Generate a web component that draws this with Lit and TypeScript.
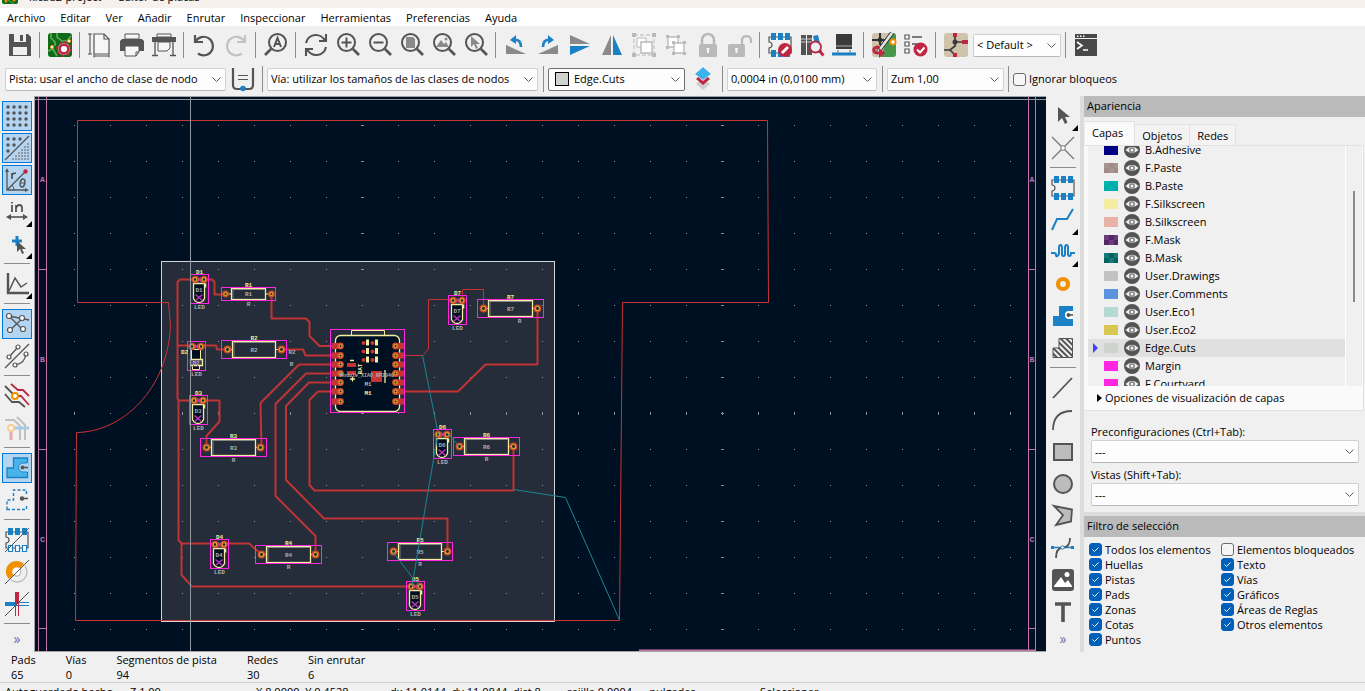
import { LitElement, html, svg, css, nothing } from "lit";
import { customElement, property } from "lit/decorators.js";
import { classMap } from "lit/directives/class-map.js";

const D = "#545454";
const B = "#1a81c4";
const R = "#bf2641";
const G = "#b9b9b9";
const O = "#f29100";

const lens = (inner: unknown) => svg`
  <circle cx="10.5" cy="9.5" r="8.5" fill="none" stroke=${D} stroke-width="2"/>
  <path d="M17 16l6 6" stroke=${D} stroke-width="2.6"/>${inner}`;

const module6 = svg`
  <path d="M1 4h22v16H1v-5a3 3 0 0 0 0-6z" fill="none" stroke=${D} stroke-width="1.2"/>
  <path d="M3 0h5v7H3zM10 0h5v7h-5zM17 0h5v7h-5zM3 17h5v7H3zM10 17h5v7h-5zM17 17h5v7h-5z" fill=${B}/>`;

const icons: Record<string, unknown> = {
  save: svg`<path d="M1 1h19l3 3v19H1z" fill=${D}/><path d="M6 1h12v8H6zM5 14h14v8H5z" fill="#efefef"/><path d="M12 2h3v6h-3z" fill=${D}/>`,
  setup: svg`<rect width="24" height="24" rx="3" fill="#0d6b1b"/>
    <path d="M3 0v5l4 4v4M9 0v4l5 4h5l4-5M0 18l5-2 4 7" fill="none" stroke="#5fae52" stroke-width="1.6"/>
    <circle cx="4" cy="14" r="1.6" fill="#fff" stroke=${O}/><circle cx="21" cy="8" r="1.6" fill="#fff" stroke=${O}/>
    <circle cx="16" cy="16" r="6" fill="#fff"/>
    <circle cx="16" cy="16" r="6.800" fill="none" stroke=${R} stroke-width="2" stroke-dasharray="2.6 2.74"/>
    <circle cx="16" cy="16" r="4.400" fill="#fff" stroke=${R} stroke-width="2.600"/>`,
  page: svg`<path d="M6 1h10l5 5v15H6z" fill="#f6f6f6" stroke=${D} stroke-width="1.2"/><path d="M16 1v5h5M2 1v20M0 1h4M0 21h4M6 23h15M6 21.500v3M21 21.500v3" fill="none" stroke=${D} stroke-width="1.1"/>`,
  print: svg`<path d="M5 1h14v5H5z" fill="#f6f6f6" stroke=${D}/><path d="M2 6h20l2 2v10H0V8z" fill=${D}/><path d="M5 13h14v6l-3 4H5z" fill="#f6f6f6" stroke=${D}/><path d="M16 23v-4h3" fill="none" stroke=${D}/>`,
  plot: svg`<path d="M5 1h14v3H5z" fill="#f6f6f6" stroke=${D}/><path d="M0 4h24v5H0z" fill=${D}/><path d="M6 9h12v6l-3 3H6z" fill="#f6f6f6" stroke=${D}/><path d="M3 9v13M21 9v13M0 22.500h6M18 22.500h6" stroke=${D} stroke-width="1.3"/>`,
  undo: svg`<path d="M3 2v7h8M3.500 8.500A9.300 9.300 0 1 1 6 20.500" fill="none" stroke=${D} stroke-width="2.2"/>`,
  redo: svg`<path d="M21 2v7h-8M20.500 8.500A9.300 9.300 0 1 0 18 20.500" fill="none" stroke="#c2c2c2" stroke-width="2.2"/>`,
  find: svg`<circle cx="13.500" cy="9.500" r="8.500" fill="none" stroke=${D} stroke-width="2"/><path d="M7 16l-6 6" stroke=${D} stroke-width="2.600"/><path d="M10 14l3.500-9L17 14M11 11h5" fill="none" stroke=${D} stroke-width="2"/>`,
  refresh: svg`<path d="M2 10A10 10 0 0 1 21 8M22 14A10 10 0 0 1 3 16M22 1v7h-7M2 23v-7h7" fill="none" stroke=${D} stroke-width="2.100"/>`,
  zoomin: lens(svg`<path d="M5.500 9.500h10M10.500 4.500v10" stroke=${D} stroke-width="2"/>`),
  zoomout: lens(svg`<path d="M5.500 9.500h10" stroke=${D} stroke-width="2"/>`),
  zoompage: lens(svg`<path d="M6 4h7l2 2v9H6z" fill="#8a8a8a"/>`),
  zoomobj: lens(svg`<path d="M4 14l5-7 3 4 2-2 3 5z" fill="#8a8a8a"/><circle cx="14" cy="6" r="1.500" fill="#8a8a8a"/>`),
  zoomsel: lens(svg`<path d="M7 3v11l3-3 2 5 2-1-2-4h4z" fill="#8a8a8a"/>`),
  rotl: svg`<path d="M2 12v9h20z" fill="#8a8a8a"/><path d="M9 7c6-1 8 2 8 7" fill="none" stroke=${B} stroke-width="2.600"/><path d="M6 7l6-5v9z" fill=${B}/>`,
  rotr: svg`<path d="M22 12v9H2z" fill="#8a8a8a"/><path d="M15 7c-6-1-8 2-8 7" fill="none" stroke=${B} stroke-width="2.600"/><path d="M18 7l-6-5v9z" fill=${B}/>`,
  flipv: svg`<path d="M2 2l20 9H2z" fill="#8a8a8a"/><path d="M2 22l20-9H2z" fill=${B}/>`,
  fliph: svg`<path d="M11 2v20H2z" fill="#8a8a8a"/><path d="M13 2v20h9z" fill=${B}/>`,
  group: svg`<rect x="2" y="2" width="20" height="20" fill="none" stroke=${G} stroke-dasharray="4 2"/><path d="M5 5h9v9H5z" fill="#fff" stroke=${G}/><path d="M9 9h11v11H9z" fill="#fff" stroke=${G} stroke-width="1.400"/><path d="M0 0h4v4H0zM20 0h4v4h-4zM0 20h4v4H0zM20 20h4v4h-4z" fill=${G}/>`,
  ungroup: svg`<path d="M4 4h10v10H4z" fill="#fff" stroke=${G} stroke-width="1.300"/><path d="M10 10h10v10H10z" fill="#fff" stroke=${G} stroke-width="1.300"/><path d="M2 2h3v3H2zM13 2h3v3h-3zM2 13h3v3H2zM8 8h3v3H8zM19 8h3v3h-3zM8 19h3v3H8zM19 19h3v3h-3z" fill=${G}/>`,
  lock: svg`<path d="M6 12V7a6 6 0 0 1 12 0v5" fill="none" stroke=${G} stroke-width="2.600"/><rect x="3" y="11" width="18" height="13" rx="1.500" fill=${G}/><path d="M12 15v5M10.500 16h3" stroke="#f4f4f4" stroke-width="2"/>`,
  unlock: svg`<path d="M14 12V6a5 5 0 0 1 9 0v4" fill="none" stroke=${G} stroke-width="2.200"/><rect x="0" y="11" width="17" height="13" rx="1.500" fill=${G}/><path d="M8.500 15v5M7 16h3" stroke="#f4f4f4" stroke-width="2"/>`,
  fpedit: svg`${module6}<circle cx="17" cy="17" r="7" fill=${R}/><path d="M14 20l6-6" stroke="#fff" stroke-width="2.800"/>`,
  libs: svg`<path d="M1 2h5v20H1zM7 2h5v20H7z" fill=${D}/><path d="M1 6h11M1 9h11" stroke="#ccc"/><path d="M13 3l5-1 4 17-5 1z" fill=${B}/><circle cx="15.500" cy="14" r="5.500" fill="#e9eff5" stroke=${R} stroke-width="1.800"/><path d="M19.500 18l4 4.500" stroke=${R} stroke-width="2.800"/>`,
  fpview: svg`<path d="M4 1h16v15H4z" fill="#3b3b3b"/><path d="M4 13h16M6 17v3M18 17v3" stroke="#8a8a8a" stroke-width="1.300"/><path d="M0 21h24" stroke=${B} stroke-width="3"/>`,
  update: svg`<rect width="24" height="24" rx="3" fill="#cfc3ab"/><path d="M24 3v18a3 3 0 0 1-3 3H9L17 0h4a3 3 0 0 1 3 3z" fill="#48964a"/><path d="M8 0v7H0M8 7h6M8 7v5" stroke="#333" stroke-width="2" fill="none"/><circle cx="8" cy="7" r="2.400" fill="#333"/><path d="M20 0L6 19" stroke="#333" stroke-width="4.500"/><path d="M20 0L6 19" stroke="#e4e4e4" stroke-width="2.600"/><circle cx="21" cy="9" r="2.600" fill="#fff" stroke=${O} stroke-width="1.800"/><path d="M7 14c-7 0-7 6 0 6" fill="none" stroke=${R} stroke-width="3"/><path d="M7 15l6 5-6 5z" fill=${R}/>`,
  drc: svg`<path d="M1 2h4v4H1zM1 9h4v4H1zM1 16h4v4H1z" fill="#fff" stroke=${D} stroke-width="1.200"/><path d="M8 4h10M8 11h5" stroke=${D} stroke-width="1.500"/><circle cx="16.500" cy="16.500" r="7" fill=${R}/><path d="M13 16.500l3 3 4.500-5" fill="none" stroke="#fff" stroke-width="2"/>`,
  sch: svg`<rect width="24" height="24" rx="3" fill="#cfc3ab"/><path d="M11 4v10M11 9h8M0 17h6l5-4M6 17l6 6" stroke="#3a3a3a" stroke-width="1.700" fill="none"/><path d="M9 0h4v4H9zM18 7h6v4h-6zM9 20h4v4H9z" fill=${R}/><circle cx="11" cy="9" r="2.500" fill="#3a3a3a"/>`,
  term: svg`<path d="M1 1h22v22H1z" fill="#484848"/><path d="M1 5.500h22" stroke="#efefef"/><path d="M3 3.300h1.500M6 3.300h1.500M9 3.300h1.500" stroke="#fff" stroke-width="1.500"/><path d="M3 9l5 3.500L3 16M9 17h5" fill="none" stroke="#fff" stroke-width="1.600"/>`,
  trackw: svg`<path d="M2 1v17q0 4 4 4h12q4 0 4-4V1" fill="none" stroke=${D} stroke-width="2.200"/><path d="M7 8.500h10M7 12.500h10" stroke=${D} stroke-width="1.200"/><circle cx="12" cy="21.500" r="2.800" fill=${B}/>`,
  layers: svg`<path d="M5 17l7-6 7 6-7 6z" fill="#cfcfcf"/><path d="M5 12l7-6 7 6-7 6z" fill=${R}/><path d="M4 7l8-8 8 8-8 7z" fill="#fff"/><path d="M4 7l8-7 8 7-8 6z" fill="#3eb0ea"/>`,
  grid: svg`${[3, 9, 15, 21].map((y) => [3, 9, 15, 21].map((x) => svg`<circle cx=${x} cy=${y} r="1.700" fill=${D}/>`))}`,
  gridov: svg`<path d="M0 24L24 0" stroke=${D} stroke-width="1.200"/>${[[3, 3], [9, 3], [15, 3], [3, 9], [9, 9], [3, 15]].map((p) => svg`<circle cx=${p[0]} cy=${p[1]} r="1.700" fill=${D}/>`)}
    ${[8, 11, 14, 17, 20, 23].map((x) => [8, 11, 14, 17, 20, 23].map((y) => (x + y >= 30 ? svg`<rect x=${x - 1} y=${y - 1} width="2" height="2" fill="#8d9aa5"/>` : nothing)))}`,
  polar: svg`<path d="M2 2v20h20M2 22L20 4" fill="none" stroke=${D} stroke-width="1.300"/><path d="M0 4l2-4 2 4zM20 20l4 2-4 2z" fill=${D}/><path d="M7 17q2 2 2 5" fill="none" stroke=${D}/><circle cx="20.500" cy="3.500" r="2.200" fill=${R}/><path d="M7 11V5m0 2q1-2 4-2" fill="none" stroke=${D} stroke-width="1.700"/><ellipse cx="17.500" cy="15" rx="2.300" ry="4" fill="none" stroke=${D} stroke-width="1.500" transform="rotate(12 17.500 15)"/><path d="M15 15h5" stroke=${D}/>`,
  inch: svg`<path d="M7 5v7M7 2v1.500M11 12V5m0 3q1-3 3.500-3T17 8v4" fill="none" stroke=${D} stroke-width="1.800"/><path d="M3 17h18" stroke=${D} stroke-width="1.600"/><path d="M1 17l5-3v6zM23 17l-5-3v6z" fill=${D}/>`,
  cursor: svg`<path d="M12 4v10M7 9h10" stroke=${B} stroke-width="3"/><path d="M12 9v11l3-3 2 5 2-1-2-4h4z" fill=${D}/>`,
  curve: svg`<path d="M3 1v20h21" fill="none" stroke=${D} stroke-width="2.400"/><path d="M4 19L10 6l6 9 6-4" fill="none" stroke=${D} stroke-width="1.500"/>`,
  rats: svg`<path d="M4 4l14 14M4 19L19 5M4 4l20 4" stroke=${D} stroke-width="1.300"/><g fill="#fff" stroke=${D} stroke-width="1.200"><circle cx="4" cy="4" r="2.500"/><circle cx="17" cy="6" r="2.500"/><circle cx="5" cy="18" r="2.500"/><circle cx="18" cy="17" r="2.500"/></g>`,
  ratc: svg`<path d="M0 24L24 0M4 13L13 3M10 21q10-1 11-12" fill="none" stroke=${D} stroke-width="1.300"/><g fill="#fff" stroke=${D} stroke-width="1.200"><circle cx="4" cy="13" r="2"/><circle cx="13" cy="3" r="2"/><circle cx="10" cy="21" r="2"/><circle cx="21" cy="10" r="2"/></g>`,
  inactive: svg`<path d="M6 0l7 6h5l6 6M11 12h5l8 9" fill="none" stroke=${R} stroke-width="1.800"/><path d="M0 2l8 8M0 10l7 8h7l6 5" fill="none" stroke=${D} stroke-width="1.800"/><circle cx="10" cy="12" r="3" fill="#fff" stroke=${O} stroke-width="2"/>`,
  hicon: svg`<path d="M0 4h9l6 6v14M12 1l8 8v15" fill="none" stroke="#c0c0c0" stroke-width="2"/><path d="M6 13v11" stroke="#e5a9b3" stroke-width="3"/><path d="M9 12h15" stroke="#a6cbe5" stroke-width="3"/><circle cx="6" cy="12" r="3" fill="#fff" stroke="#f5ce96" stroke-width="2"/>`,
  zonefill: svg`<path d="M2 21.500V12h6.500V2h14v19.500z" fill="#48b3ea" stroke=${B} stroke-width="1.300"/><path d="M23 7h-5a4.500 4.500 0 0 0 0 9h5z" fill="#b3d5f2"/><path d="M22 7h-4a4.500 4.500 0 0 0 0 9h4" fill="none" stroke=${B}/><path d="M17 11.500h6" stroke=${D} stroke-width="1.600"/><circle cx="17.500" cy="11.500" r="2" fill=${D}/>`,
  zoneout: svg`<path d="M2 21.500V12h6.500V2h13v19.500z" fill="none" stroke=${B} stroke-width="1.400" stroke-dasharray="3 2"/><path d="M23 7h-6v9h6z" fill="#efefef"/><path d="M16 10.500h7" stroke=${D} stroke-width="1.600"/><circle cx="17" cy="10.500" r="2.200" fill=${D}/>`,
  fpsketch: svg`<path d="M1 4h22v16H1v-5a3 3 0 0 0 0-6z" fill="none" stroke=${D} stroke-width="1.200"/><path d="M3 0h5v7H3zM10 0h5v7h-5zM17 0h5v7h-5z" fill=${B}/><path d="M3.500 17.500h4v6h-4zM10.500 17.500h4v6h-4zM17.500 17.500h4v6h-4z" fill="#fff" stroke=${B} stroke-width="1.200"/><path d="M0 24L24 0" stroke=${D}/>`,
  viask: svg`<path d="M4 19A10.500 10.500 0 0 1 19 4l-4 4.500a4.500 4.500 0 0 0-6.500 6.500z" fill=${O}/><circle cx="12" cy="12" r="4" fill="#fff"/><path d="M20 6A10 10 0 0 1 6 20" fill="none" stroke="#bcbcbc" stroke-width="1.300"/><path d="M14.500 9A4 4 0 0 1 9 15" fill="none" stroke="#bcbcbc" stroke-width="1.300"/><path d="M0 24L24 0" stroke=${D}/>`,
  tracksk: svg`<path d="M0 12h12" stroke=${B} stroke-width="4"/><path d="M12 10.500h12M12 13.500h12" stroke=${B}/><path d="M12 0v12" stroke=${R} stroke-width="4"/><path d="M10.500 12v12M13.500 12v12" stroke=${R}/><path d="M0 24L24 0" stroke=${D}/>`,
  arrow: svg`<path d="M7 3v15l4-4 3 6 2.500-1.500L14 13h5z" fill=${D}/>`,
  ratx: svg`<path d="M1 1l22 22M23 1L1 23" stroke="#7a7a7a" stroke-width="1.400"/><circle cx="12" cy="12" r="2.300" fill="#fff" stroke="#7a7a7a"/>`,
  module: module6,
  route: svg`<path d="M1 22l5-11h10l6-10" fill="none" stroke=${B} stroke-width="2"/>`,
  tune: svg`<path d="M0 13h3q2 0 2 2t1.500 1T8 13V8q0-3 1.500-3T11 8v6q0 2 1.500 2T14 14V8q0-3 1.500-3T17 8v6q0 2 1.500 2T20 13h4" fill="none" stroke=${B} stroke-width="2"/>`,
  via: svg`<circle cx="12" cy="12" r="5" fill="none" stroke=${O} stroke-width="4.200"/>`,
  zone: svg`<path d="M2 22V12h6V2h14v20z" fill=${B}/><path d="M22 7h-4a4 4 0 0 0 0 8h4z" fill="#fff"/><path d="M17 11h5" stroke=${D} stroke-width="1.600"/><circle cx="17.500" cy="11" r="2" fill=${D}/>`,
  rule: svg`<defs><pattern id="h" width="4" height="4" patternUnits="userSpaceOnUse" patternTransform="rotate(-45)"><rect width="2" height="4" fill=${D}/></pattern></defs><path d="M2 21.500V12h6V2.500h13.500v19z" fill="url(#h)" stroke=${D}/>`,
  line: svg`<path d="M2 22L21 2" stroke=${D} stroke-width="1.800"/>`,
  arc: svg`<path d="M2 22Q2 3 21 3" fill="none" stroke=${D} stroke-width="1.800"/>`,
  rect: svg`<rect x="3" y="4" width="18" height="16" fill="#bcbcbc" stroke=${D} stroke-width="2"/>`,
  circle: svg`<circle cx="12" cy="12" r="9" fill="#bcbcbc" stroke=${D} stroke-width="2"/>`,
  poly: svg`<path d="M3 2l18 3.500-1 12-15 3.500 7-10z" fill="#bcbcbc" stroke=${D} stroke-width="1.800"/>`,
  bezier: svg`<path d="M1 11.500h21" stroke=${B} stroke-width="1.500"/><path d="M5 22q0-10 7-10.500T19 2" fill="none" stroke=${D} stroke-width="1.800"/><path d="M0 10h3v3H0zM20 10h3v3h-3z" fill=${B}/><circle cx="11.500" cy="11.500" r="1.700" fill="#fff" stroke=${B}/>`,
  image: svg`<rect x="1" y="1" width="22" height="22" rx="3" fill=${D}/><path d="M3 18l7-9 4 6 3-3 4 6v1H3z" fill="#fff"/><circle cx="16" cy="6.500" r="2.500" fill="#fff"/>`,
  text: svg`<path d="M4 4h16M12 4v18" fill="none" stroke=${D} stroke-width="3.600"/>`,
};

@customElement("tool-icon")
class ToolIcon extends LitElement {
  static styles = css`
    :host { display: block; width: 24px; height: 24px; }
    svg { display: block; width: 24px; height: 24px; overflow: visible; }
  `;
  @property() name = "";
  render() {
    return html`<svg viewBox="0 0 24 24" aria-hidden="true">${icons[this.name]}</svg>`;
  }
}

const SILK = "#f2eda1";
const MAG = "#ff26e2";
const CU = "#c83434";
const FAB = "#afafaf";

const pad = (x: number, y: number, r = 3) => svg`
  <circle cx=${x} cy=${y} r=${r} fill="#10202c" stroke="#cf4a2c" stroke-width="1.800"/>
  <circle cx=${x} cy=${y} r=${r - 1} fill="none" stroke="#d9a62b" stroke-width="1.200"/>`;

const label = (x: number, y: number, t: string, c: string) =>
  svg`<text x=${x} y=${y} fill=${c} text-anchor="middle">${t}</text>`;

const resistor = (x: number, y: number, n: string, w = 66, h = 18, vx = w / 2, vy = h + 5) => {
  const bx = w === 54 ? 10 : 11;
  return svg`<g transform="translate(${x} ${y})">
    <path d="M6 ${h / 2}H${w - 5}" stroke=${SILK}/>
    <rect x=${bx} y="1" width=${w - 2 * bx} height=${h - 2} fill="#242d39" stroke=${SILK} stroke-width="1.300"/>
    <path d="M${bx + 1.5} ${h - 2}V2H${w - bx - 1}" fill="none" stroke=${FAB} stroke-width=".6"/>
    <rect width=${w} height=${h} fill="none" stroke=${MAG}/>
    ${pad(w === 54 ? 4 : 6, h / 2, w === 54 ? 2.5 : 3)}${pad(w === 54 ? 50 : 60, h / 2, w === 54 ? 2.5 : 3)}
    ${label(w / 2, -1, n, SILK)}${label(w / 2, h / 2 + 2, n, FAB)}${label(vx, vy, "R", FAB)}
  </g>`;
};

const domeBody = svg`
  <path d="M3 9h11v15q-2 4-5.500 4T3 24z" fill="#001023" stroke=${SILK} stroke-width="1.300"/>
  <path d="M15 9v4" stroke=${SILK} stroke-width="1.500"/>
  <path d="M5 20l7 6M12 20l-7 6" stroke="#c433bb" stroke-width="1.500"/>`;

const flatBody = svg`
  <path d="M4 8h9v10H4zM5 24h7v4H5z" fill="#001023" stroke=${SILK}/>
  <path d="M3 18h12v6H3z" fill="#3a4450" stroke=${SILK} stroke-width="1.300"/>
  <path d="M5 19l6 6M11 19l-6 6" stroke="#c433bb"/>`;

const led = (x: number, y: number, n: string, flat = false) => svg`<g transform="translate(${x} ${y})">
  ${flat ? flatBody : domeBody}
  <rect width="18" height="29" fill="none" stroke=${MAG}/>
  <path d="M7 3l4 4M11 3l-4 4" stroke="#c433bb" stroke-width="1.500"/>
  ${pad(4.5, 5, 2.8)}${pad(13.5, 5, 2.8)}
  ${flat ? label(-3, 12, n, SILK) : label(9, -1, n, SILK)}${label(8.5, flat ? 23 : 17, n, FAB)}${label(9, 34, "LED", FAB)}
</g>`;

const pinsY = [346, 355.5, 364.5, 373.5, 382.5, 391.5, 401.5];

@customElement("pcb-canvas")
class PcbCanvas extends LitElement {
  static styles = css`
    :host { display: block; min-width: 0; min-height: 0; background: #001023; overflow: hidden; }
    svg { display: block; width: 100%; height: 100%; }
    text { font: 700 6px "Liberation Mono", monospace; }
    .zone-letter { font-size: 8px; fill: #c872ac; }
    .tiny { font-size: 5px; }
  `;
  render() {
    return html`<svg viewBox="34 96 1012 556" preserveAspectRatio="xMinYMin slice">
      <defs>
        <pattern id="dots" x="74" y="125" width="36" height="36" patternUnits="userSpaceOnUse">
          <rect width="1" height="1" fill="#8b9093"/>
        </pattern>
      </defs>
      <rect x="161.500" y="261.500" width="393" height="360" fill="#242d39" stroke="#d4d4d4"/>
      <rect x="74" y="120" width="940" height="520" fill="url(#dots)"/>
      <path d="M361 269.500h3M361 125.500h3M361 161.500h3M361 197.500h3M361 233.500h3M361 629.500h3M721 125.500h3M721 161.500h3M721 197.500h3M721 233.500h3M721 269.500h3M721 305.500h3M721 341.500h3M721 377.500h3M721 449.500h3M721 485.500h3M721 521.500h3M721 557.500h3M721 593.500h3M721 629.500h3M361 413.500h3M721 413.500h3" stroke="#8b9093"/>
      <path d="M74.500 412v3M182.500 412v3M218.500 412v3M290.500 412v3M434.500 412v3M470.500 412v3M506.500 412v3M542.500 412v3M578.500 412v3M614.500 412v3M650.500 412v3M686.500 412v3M722.500 412v3M758.500 412v3M794.500 412v3M830.500 412v3M866.500 412v3M902.500 412v3M938.500 412v3M974.500 412v3M1010.500 412v3" stroke="#8b9093"/>
      <g stroke="#c872ac" fill="none">
        <path d="M38.500 97v554M46.500 97v554M38.500 269.500h8M38.500 449.500h8M38.500 628.500h8"/>
        <path d="M1028.500 97v554M1035.500 97v554M1028.500 269.500h7M1028.500 449.500h7M1028.500 628.500h7"/>
        <path d="M639 650.500h396" stroke-width="2"/>
      </g>
      ${[["A", 182], ["B", 362], ["C", 542]].map(([t, y]) => svg`
        <text class="zone-letter" x="42.500" y=${y} text-anchor="middle">${t}</text>
        <text class="zone-letter" x="1032" y=${y} text-anchor="middle">${t}</text>`)}
      <path d="M77.500 120.500H767.500L768.500 302.500H622.500L619.500 620.500H75.500L76.500 432.500C122 432 168 390 170.500 325L168.500 302.500H77.500z" fill="none" stroke=${CU}/>
      <g fill="none" stroke="#c03435" stroke-width="2" stroke-linejoin="round">
        <path d="M194 279.500H180L177.500 282V398L178.500 401V540L181.500 543.500H215M181.500 543.500V575L192 586.500H411M177.500 345.500H191M178.500 400.500H193"/>
        <path d="M203 279.500H212L214.500 282V294.500H226M271.500 294.500V318.500H306L309.500 322V336L319.500 346H336"/>
        <path d="M200 345.500H216L217 349.500H226M281 349.500H303L305.500 355.500H336"/>
        <path d="M203 400.500H219.500V421.500L206.500 436V447M261.500 447L260.500 403L299 364.500H336"/>
        <path d="M336 373.500H306L275.500 404V496L315.500 536V554M336 382.500H309L286 406V480L324 518.500H447.500V551"/>
        <path d="M336 391.500H318L309.500 400V485L314.500 490.500H513.500V446M224 543.500H249L261 554"/>
        <path d="M398 391.500H458L485.500 364.500H537.500V308"/>
        <path d="M398 355.500H423L428.500 349V299.500H453M462.500 299.500V289.500H483.500V308" stroke-width="1"/>
      </g>
      ${resistor(221.5, 287.5, "R1", 54, 13)}
      ${resistor(221.5, 340.5, "R2", 65, 18, 70, 25)}
      ${label(292, 354, "R2", FAB)}
      ${resistor(200.5, 438.5, "R3")}
      ${resistor(255.5, 545.5, "R4")}
      ${resistor(387.5, 542.5, "R5", 65)}
      ${resistor(453.5, 437.5, "R6")}
      ${resistor(477.5, 299.5, "R7", 66, 18, 42)}
      ${led(190.5, 274.5, "D1")}
      ${led(187.5, 341.5, "D2", true)}
      ${led(189.5, 395.5, "D3")}
      ${led(210.5, 539.5, "D4")}
      ${led(406.5, 581.5, "D5")}
      ${led(433.5, 429.5, "D6")}
      ${led(448.5, 295.5, "D7")}
      <g>
        <rect x="335.500" y="335.500" width="64" height="76" rx="5" fill="#001023" stroke=${SILK} stroke-width="1.300"/>
        <path d="M351.500 335V330.500h33V335" fill="none" stroke=${SILK}/>
        <rect x="330.500" y="329.500" width="74" height="83" fill="none" stroke=${MAG}/>
        ${pinsY.map((y) => svg`<rect x="332" y=${y - 3} width="10" height="6" fill=${CU}/><rect x="394" y=${y - 3} width="10" height="6" fill=${CU}/>${pad(340.5, y, 2.5)}${pad(395.5, y, 2.5)}`)}
        ${[343, 351.5, 360].map((y) => svg`<circle cx="363.500" cy=${y} r="2" fill=${CU}/><circle cx="372.500" cy=${y} r="2" fill=${CU}/><rect x="366" y=${y - 3.5} width="3" height="6" fill=${SILK}/><rect x="375" y=${y - 3.5} width="3" height="6" fill=${SILK}/>`)}
        <path d="M347 363h9v4h-9zM347 371h9v4h-9zM371 371h11v11h-11z" fill=${CU}/>
        <path d="M350 360.500h4M350 379h5M352.500 376.500v5M385 370v13" stroke=${SILK} stroke-width="1.300"/>
        <text class="tiny" x="367" y="377" fill=${FAB} text-anchor="middle">Module_XIAO_RP2040</text>
        <text x="0" y="0" fill=${SILK} text-anchor="middle" transform="translate(362 369) rotate(-90)">BAT</text>
        ${label(368, 386, "M1", FAB)}${label(368, 395, "M1", SILK)}
      </g>
      <path d="M422.500 355.500L438 433L412 586M447 433L459 446M392.500 551.500L412 577L420 586M513.500 489.500L565.500 497.500L619.500 620" fill="none" stroke="#1f8593"/>
      <path d="M34 99.500H1046M190.500 97V652" stroke="#8f979e"/>
      <path d="M34 96.500H1046M34.500 96v556M34 651.500h1012" stroke="#a0a4a8" fill="none"/>
    </svg>`;
  }
}

const SEP = "|";
const topTools = ["save", SEP, "setup", SEP, "page", "print", "plot", SEP, "undo", "redo", SEP, "find", SEP, "refresh", "zoomin", "zoomout", "zoompage", "zoomobj", "zoomsel", SEP, "rotl", "rotr", "flipv", "fliph", "group", "ungroup", "lock", "unlock", SEP, "fpedit", "libs", "fpview", SEP, "update", "drc", SEP, "sch"];
const leftTools = ["grid", "gridov", "polar", "inch", "cursor", SEP, "curve", SEP, "rats", "ratc", SEP, "inactive", "hicon", SEP, "zonefill", "zoneout", SEP, "fpsketch", "viask", "tracksk", SEP];
const rightTools = ["arrow", "ratx", SEP, "module", "route", "tune", "via", "zone", "rule", SEP, "line", "arc", "rect", "circle", "poly", "bezier", "image", "text"];
const pressed = new Set(["grid", "gridov", "polar", "rats", "zonefill"]);
const withMenu = new Set(["inch", "cursor", "curve", "arrow", "route", "tune"]);

const layers: [string, string, string?][] = [
  ["B.Adhesive", "#000084"],
  ["F.Paste", "#a8968e", "#a08c84"],
  ["B.Paste", "#00b5b0", "#00aca7"],
  ["F.Silkscreen", "#f2eda1"],
  ["B.Silkscreen", "#e8b2a7"],
  ["F.Mask", "#6d3c7c", "#552666"],
  ["B.Mask", "#167a75", "#02625e"],
  ["User.Drawings", "#c2c2c2"],
  ["User.Comments", "#5994dc"],
  ["User.Eco1", "#b4dbd2"],
  ["User.Eco2", "#d8c852"],
  ["Edge.Cuts", "#d0d2cd"],
  ["Margin", "#ff26e2"],
  ["F.Courtyard", "#ff26e2"],
];

const stats = [["Pads", "65"], ["Vías", "0"], ["Segmentos de pista", "94"], ["Redes", "30"], ["Sin enrutar", "6"]];

@customElement("app-root")
class AppRoot extends LitElement {
  static styles = css`
    :host { display: flex; flex-direction: column; height: 100vh; overflow: hidden; background: #f0f0f0; color: #000; font: 11px/16px "Open Sans", "Noto Sans", sans-serif; }
    * { box-sizing: border-box; }
    button, select, input { font: inherit; color: inherit; margin: 0; }
    button { border: 0; padding: 0; background: none; }
    .title { display: flex; align-items: flex-end; gap: 11px; height: 8px; flex: none; padding: 0 2px 4px; background: #f6f1ec; overflow: hidden; }
    .title span { line-height: 14px; white-space: pre; }
    .title svg { width: 16px; height: 16px; flex: none; }
    .menu { display: flex; gap: 15px; height: 18px; flex: none; padding-left: 7px; background: #fff; }
    .menu button { line-height: 18px; padding-top: 1px; white-space: nowrap; }
    .bar { display: flex; align-items: center; height: 36px; flex: none; padding: 2px 0 0 4px; }
    .bar.second { height: 34px; padding: 0 0 0 5px; }
    .tool { display: grid; place-items: center; flex: none; width: 32px; height: 32px; }
    .sep { flex: none; width: 8px; height: 26px; border-left: 1px solid #8c8c8c; margin-left: 3px; margin-right: -3px; }
    .pick { display: grid; align-items: center; flex: none; height: 23px; border: 1px solid #d0d0d0; border-bottom-color: #b8b8b8; border-radius: 2px; background: #fdfdfd; }
    .pick > * { grid-area: 1 / 1; }
    .pick select { appearance: none; width: 100%; height: 21px; border: 0; padding: 0 20px 0 3px; background: none; }
    .pick .chev { justify-self: end; width: 9px; height: 5px; margin-right: 4px; pointer-events: none; }
    .w-track { width: 221px; margin-right: 1px; }
    .w-via { width: 271px; margin-right: 2px; }
    .w-layer { width: 137px; margin-right: 2px; border-color: #707070; }
    .w-layer select { padding-left: 25px; }
    .w-grid { width: 150px; margin-right: 2px; }
    .w-zoom { width: 117px; margin-right: 1px; }
    .w-net { width: 88px; margin: 0 1px; }
    .lsw { width: 14px; height: 14px; margin-left: 6px; border: 1px solid #000; background: #d0d2cd; pointer-events: none; }
    .check { display: flex; align-items: center; gap: 3px; white-space: nowrap; }
    .check input { appearance: none; flex: none; width: 13px; height: 13px; border: 1px solid #6b6b6b; border-radius: 3px; background: #f6f6f6; }
    .check input:checked { border-color: #005fb8; background: #005fb8 url('data:image/svg+xml,<svg xmlns="http://www.w3.org/2000/svg" viewBox="0 0 11 11"><path d="M2.500 5.500l2 2 4-4" fill="none" stroke="white" stroke-width="1"/></svg>') center / 11px 11px; }
    .main { display: flex; flex: 1; min-height: 0; }
    .side { display: flex; flex-direction: column; align-items: center; flex: none; width: 34px; padding-top: 5px; }
    .side .tool { position: relative; width: 30px; height: 30px; margin-bottom: 2px; }
    .side .tool.on { border: 1px solid #0078d7; background: #b3d5f2; }
    .side .tool.menu-corner::after { content: ""; position: absolute; right: 0; bottom: 0; border: 3px solid #000; border-top-color: transparent; border-left-color: transparent; }
    .hsep { flex: none; width: 26px; height: 8px; border-top: 1px solid #8c8c8c; margin-top: 2px; margin-bottom: -2px; }
    .more { height: 20px; margin-top: auto; margin-bottom: 3px; color: #6a6ab0; font-size: 14px; line-height: 18px; }
    pcb-canvas { flex: 1; }
    .panel { display: flex; flex-direction: column; flex: none; width: 285px; border-left: 4px solid #dcdcdc; }
    h2 { flex: none; height: 21px; margin: 0; padding-left: 3px; background: #bababa; font-size: 11px; font-weight: 400; line-height: 20px; }
    .tabs { display: flex; align-items: flex-end; height: 28px; padding-left: 1px; flex: none; }
    .tabs button { height: 21px; padding: 2px 7px 0; border: 1px solid #e2e2e2; border-bottom: 0; border-left: 0; background: #f3f3f3; }
    .tabs button.on { height: 24px; padding: 0 11px 2px 7px; background: #fafafa; }
    .page { border: 1px solid #e2e2e2; border-left: 0; padding: 0 1px 0 4px; background: #fafafa; flex: none; margin-right: 1px; }
    .list { display: flex; height: 240px; overflow: hidden; background: #f0f0f0; }
    .rows { flex: 1; margin: -5px 0 0; padding: 0; list-style: none; border-right: 1px solid #fff; }
    .row { display: flex; align-items: center; height: 18px; }
    .row.on { background: #e0e0e0; }
    .mark { width: 16px; padding-left: 5px; }
    .mark svg, .eye svg { display: block; }
    .sw { width: 14px; height: 10px; margin-right: 6px; }
    .sw svg { display: block; }
    .eye { width: 16px; margin-right: 5px; }
    .track { width: 16px; padding: 45px 0 0 7px; }
    .thumb { width: 2px; height: 111px; background: #8a8a8a; }
    .opts { display: flex; align-items: center; gap: 3px; width: 100%; height: 24px; padding-left: 9px; }
    .field { display: flex; flex-direction: column; padding: 0 6px 0 7px; }
    .field label { line-height: 17px; }
    .fields { display: flex; flex-direction: column; gap: 3px; padding: 12px 0 6px; flex: none; }
    .filter { border-top: 4px solid #dcdcdc; }
    .cols { display: grid; grid-template-columns: 132px 1fr; padding: 5px 0 0 5px; }
    .cols .check { height: 15px; }
    .stats { display: flex; gap: 30px; flex: none; height: 30px; margin: 0; padding: 0 0 0 11px; }
    dt, dd { margin: 0; line-height: 15px; }
    .status { display: flex; flex: none; height: 9px; padding: 1px 0 0 5px; border-top: 1px solid #d0d0d0; overflow: hidden; white-space: pre; }
    .status span { flex: none; }
    .s1 { width: 125px; } .s2 { width: 126px; } .s3 { width: 134px; } .s4 { width: 177px; } .s5 { width: 193px; }
  `;

  tool(name: string) {
    if (name === SEP) return html`<span class="sep"></span>`;
    return html`<button class="tool" aria-label=${name}><tool-icon name=${name}></tool-icon></button>`;
  }

  sideTool(name: string) {
    if (name === SEP) return html`<span class="hsep"></span>`;
    return html`<button class=${classMap({ tool: true, on: pressed.has(name), "menu-corner": withMenu.has(name) })} aria-label=${name}><tool-icon name=${name}></tool-icon></button>`;
  }

  pick(cls: string, text: string, name: string, id = "", extra: unknown = nothing) {
    return html`<div class="pick ${cls}">
      <select id=${id || nothing} aria-label=${name}><option>${text}</option></select>${extra}
      <svg class="chev" viewBox="0 0 9 5"><path d="M.5.5l4 4 4-4" fill="none" stroke="#5a5a5a"/></svg>
    </div>`;
  }

  check(text: string, on = true) {
    return html`<label class="check"><input type="checkbox" .checked=${on}>${text}</label>`;
  }

  layerRow([name, color, alt]: [string, string, string?]) {
    const on = name === "Edge.Cuts";
    return html`<li class=${classMap({ row: true, on })}>
      <span class="mark">${on ? html`<svg width="5" height="10" viewBox="0 0 5 10"><path d="M0 0l5 5-5 5z" fill="#4040ff"/></svg>` : nothing}</span>
      <span class="sw"><svg width="14" height="10"><rect width="14" height="10" fill=${color}/>${alt ? svg`<path d="M5 0h5v5H5zM0 5h5v5H0zM10 5h4v5h-4z" fill=${alt}/>` : nothing}</svg></span>
      <span class="eye"><svg width="16" height="16" viewBox="0 0 16 16"><circle cx="8" cy="8" r="8" fill="#545454"/><path d="M1.500 8Q8 1.500 14.500 8 8 14.500 1.500 8z" fill="#f0f0f0"/><circle cx="8" cy="8" r="2.200" fill="#f0f0f0" stroke="#777" stroke-width="1.300"/></svg></span>
      ${name}
    </li>`;
  }

  render() {
    const left = ["Todos los elementos", "Huellas", "Pistas", "Pads", "Zonas", "Cotas", "Puntos"];
    const right = ["Elementos bloqueados", "Texto", "Vías", "Gráficos", "Áreas de Reglas", "Otros elementos"];
    return html`
      <header class="title">
        <svg viewBox="0 0 16 16"><rect width="16" height="16" rx="2" fill="#0d6b1b"/><path d="M2 0l4 12 6 4" stroke="#5fae52" fill="none"/><circle cx="4" cy="13" r="1.500" fill=${O}/><circle cx="12" cy="12" r="1.500" fill=${O}/></svg>
        <span>kicad2-project — Editor de placas</span>
      </header>
      <nav class="menu">${["Archivo", "Editar", "Ver", "Añadir", "Enrutar", "Inspeccionar", "Herramientas", "Preferencias", "Ayuda"].map((m) => html`<button>${m}</button>`)}</nav>
      <div class="bar">
        ${topTools.map((t) => this.tool(t))}
        ${this.pick("w-net", "< Default >", "Variante")}
        ${this.tool(SEP)}${this.tool("term")}
      </div>
      <div class="bar second">
        ${this.pick("w-track", "Pista: usar el ancho de clase de nodo", "Pista")}
        ${this.tool("trackw")}${this.tool(SEP)}
        ${this.pick("w-via", "Vía: utilizar los tamaños de las clases de nodos", "Vía")}
        ${this.tool(SEP)}
        ${this.pick("w-layer", "Edge.Cuts", "Capa", "", html`<span class="lsw"></span>`)}
        ${this.tool("layers")}${this.tool(SEP)}
        ${this.pick("w-grid", "0,0004 in (0,0100 mm)", "Rejilla")}
        ${this.tool(SEP)}
        ${this.pick("w-zoom", "Zum 1,00", "Zum")}
        ${this.tool(SEP)}
        ${this.check("Ignorar bloqueos", false)}
      </div>
      <div class="main">
        <div class="side">${leftTools.map((t) => this.sideTool(t))}<button class="more">»</button></div>
        <pcb-canvas></pcb-canvas>
        <div class="side">${rightTools.map((t) => this.sideTool(t))}<button class="more">»</button></div>
        <aside class="panel">
          <h2>Apariencia</h2>
          <div class="tabs"><button class="on">Capas</button><button>Objetos</button><button>Redes</button></div>
          <div class="page">
            <div class="list">
              <ul class="rows">${layers.map((l) => this.layerRow(l))}</ul>
              <div class="track"><div class="thumb"></div></div>
            </div>
            <button class="opts"><svg width="5" height="8" viewBox="0 0 5 8"><path d="M0 0l5 4-5 4z"/></svg>Opciones de visualización de capas</button>
          </div>
          <div class="fields">
            <div class="field"><label for="presets">Preconfiguraciones (Ctrl+Tab):</label>${this.pick("", "---", "Preconfiguraciones", "presets")}</div>
            <div class="field"><label for="views">Vistas (Shift+Tab):</label>${this.pick("", "---", "Vistas", "views")}</div>
          </div>
          <section class="filter">
            <h2>Filtro de selección</h2>
            <div class="cols">
              <div>${left.map((t) => this.check(t))}</div>
              <div>${right.map((t, i) => this.check(t, i > 0))}</div>
            </div>
          </section>
        </aside>
      </div>
      <dl class="stats">${stats.map(([k, v]) => html`<div><dt>${k}</dt><dd>${v}</dd></div>`)}</dl>
      <footer class="status"><span class="s1">Autoguardado hecho</span><span class="s2">Z 1,00</span><span class="s3">X 8,0000  Y 0,4528</span><span class="s4">dx 11,0144  dy 11,0844  dist 8</span><span class="s5">rejilla 0,0004      pulgadas</span><span>Seleccionar</span></footer>
    `;
  }
}
